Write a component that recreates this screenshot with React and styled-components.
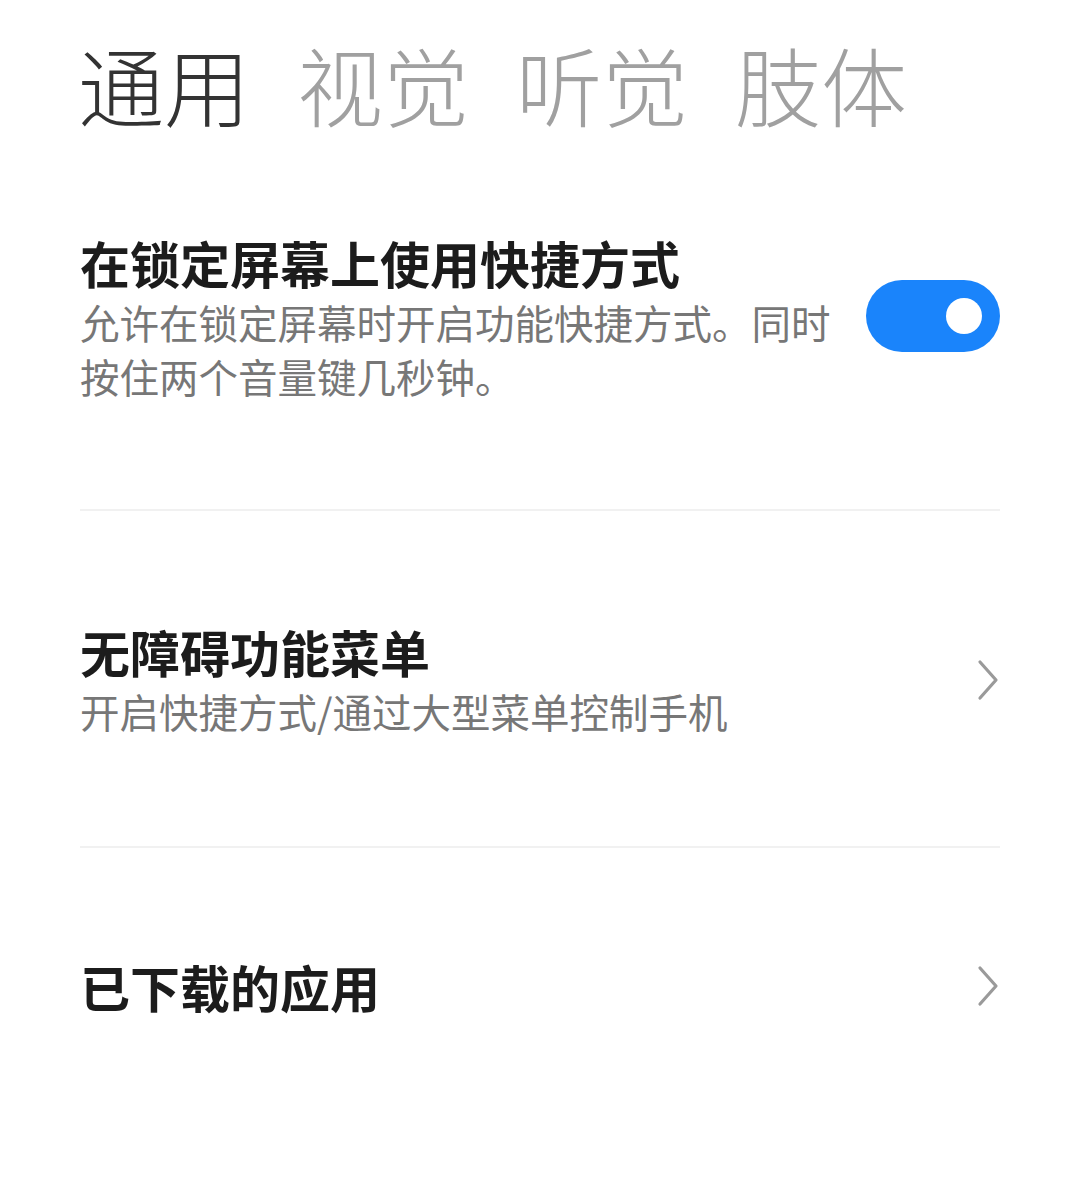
import styled, { createGlobalStyle } from "styled-components";

const GlobalStyle = createGlobalStyle`
  body {
    margin: 0;
    background: #ffffff;
    font-family: "Noto Sans CJK SC", "Noto Sans", sans-serif;
  }
`;

const Page = styled.div`
  width: 1080px;
  min-height: 1183px;
  background: #ffffff;
`;

const Tabs = styled.div`
  display: flex;
  gap: 47px;
  padding: 41px 78px 0 78px;
`;

const Tab = styled.div`
  font-size: 86px;
  line-height: 86px;
  font-weight: 300;
  color: ${(p) => (p.$active ? "#333333" : "#a0a0a0")};
`;

const List = styled.div`
  padding: 0 80px;
`;

const Row = styled.div`
  display: flex;
  align-items: center;
  gap: 30px;
  padding: ${(p) => p.$pad};
  border-bottom: ${(p) => (p.$last ? "none" : "2px solid #f1f1f1")};
`;

const TextBlock = styled.div`
  flex: 1;
  display: flex;
  flex-direction: column;
  gap: 3px;
`;

const Title = styled.div`
  font-size: 50px;
  line-height: 60px;
  font-weight: 700;
  color: #1c1c1c;
`;

const Subtitle = styled.div`
  font-size: 39.5px;
  line-height: 54px;
  color: #777777;
  max-width: 760px;
`;

const Toggle = styled.div`
  flex: none;
  width: 134px;
  height: 72px;
  border-radius: 36px;
  background: #1a84fb;
  display: flex;
  align-items: center;
  justify-content: flex-end;
  padding: 0 18px;
  box-sizing: border-box;
  margin-bottom: 4px;
`;

const Knob = styled.div`
  width: 36px;
  height: 36px;
  border-radius: 50%;
  background: #ffffff;
`;

const Chevron = () => (
  <svg width="24" height="42" viewBox="0 0 24 42" style={{ flex: "none" }}>
    <path
      d="M4 3 L20 21 L4 39"
      fill="none"
      stroke="#9a9a9a"
      strokeWidth="3.2"
      strokeLinecap="round"
      strokeLinejoin="round"
    />
  </svg>
);

export default function App() {
  return (
    <Page>
      <GlobalStyle />
      <Tabs>
        <Tab $active>通用</Tab>
        <Tab>视觉</Tab>
        <Tab>听觉</Tab>
        <Tab>肢体</Tab>
      </Tabs>
      <List>
        <Row $pad="105px 0 106px 0">
          <TextBlock>
            <Title>在锁定屏幕上使用快捷方式</Title>
            <Subtitle>允许在锁定屏幕时开启功能快捷方式。同时按住两个音量键几秒钟。</Subtitle>
          </TextBlock>
          <Toggle>
            <Knob />
          </Toggle>
        </Row>
        <Row $pad="110px 0 108px 0">
          <TextBlock>
            <Title>无障碍功能菜单</Title>
            <Subtitle>开启快捷方式/通过大型菜单控制手机</Subtitle>
          </TextBlock>
          <Chevron />
        </Row>
        <Row $pad="108px 0 100px 0" $last>
          <TextBlock>
            <Title>已下载的应用</Title>
          </TextBlock>
          <Chevron />
        </Row>
      </List>
    </Page>
  );
}
